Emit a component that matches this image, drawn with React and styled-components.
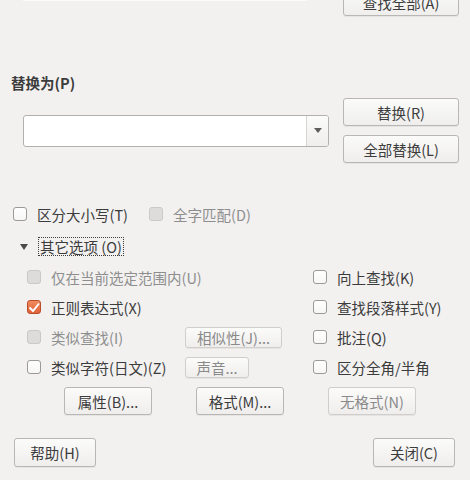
import React from 'react';
import styled, { createGlobalStyle } from 'styled-components';

const GlobalStyle = createGlobalStyle`
  html, body {
    margin: 0;
    padding: 0;
    background: #f2f1f0;
  }
`;

const FONT = `"Noto Sans CJK SC", "Noto Sans", sans-serif`;

const Dialog = styled.div`
  width: 470px;
  height: 480px;
  overflow: hidden;
  background: #f2f1f0;
  font-family: ${FONT};
  font-size: 14.5px;
  color: #3c3c3c;
  padding: 0 11px;
  box-sizing: border-box;
`;

const TopRow = styled.div`
  height: 16px;
  display: flex;
  align-items: flex-end;
  justify-content: space-between;
`;

const SearchStub = styled.div`
  width: 284px;
  height: 24px;
  margin-left: 12px;
  margin-bottom: 15px;
  background: #f7f7f6;
  border-bottom: 1px solid #fbfbfb;
`;

const Button = styled.button`
  box-sizing: border-box;
  width: ${(p) => p.$w || 116}px;
  height: ${(p) => p.$h || 28}px;
  padding: 0;
  border: 1px solid ${(p) => (p.$dim ? '#d0cecb' : '#b9b7b4')};
  border-radius: 3px;
  background: linear-gradient(#fbfbfa, #efeeed);
  font-family: ${FONT};
  font-size: 14.5px;
  color: ${(p) => (p.$dim ? '#8a8a8a' : '#3c3c3c')};
  box-shadow: 0 1px 0 rgba(0, 0, 0, 0.05);
  display: flex;
  align-items: center;
  justify-content: center;
  flex-shrink: 0;
`;

const SectionLabel = styled.div`
  margin-top: 58px;
  line-height: 18px;
  font-weight: bold;
  font-size: 14.5px;
`;

const ReplaceRow = styled.div`
  margin-top: 6px;
  display: flex;
  align-items: center;
  justify-content: space-between;
`;

const Combo = styled.div`
  margin-left: 12px;
  width: 306px;
  height: 32px;
  box-sizing: border-box;
  border: 1px solid #b3b1ae;
  border-radius: 3px;
  background: #fff;
  display: flex;
  justify-content: flex-end;
  overflow: hidden;
`;

const ComboArrow = styled.div`
  width: 21px;
  border-left: 1px solid #d6d5d3;
  background: linear-gradient(#fbfbfa, #efeeed);
  display: flex;
  align-items: center;
  justify-content: center;
  &::after {
    content: '';
    border-left: 4px solid transparent;
    border-right: 4px solid transparent;
    border-top: 5px solid #5e5e5e;
  }
`;

const ButtonStack = styled.div`
  display: flex;
  flex-direction: column;
  gap: 9px;
`;

const OptionRow = styled.div`
  margin-top: 40px;
  height: 22px;
  display: flex;
  align-items: center;
  padding-left: 2px;
`;

const Check = styled.label`
  display: flex;
  align-items: center;
  gap: 10px;
  color: ${(p) => (p.$disabled ? '#8e8e8e' : '#3c3c3c')};
  margin-right: ${(p) => p.$mr || 0}px;
  white-space: nowrap;
  grid-column: ${(p) => (p.$span ? 'span 2' : 'auto')};
`;

const Box = styled.span`
  box-sizing: border-box;
  width: 14px;
  height: 14px;
  border-radius: 3px;
  flex-shrink: 0;
  border: 1px solid
    ${(p) => (p.$checked ? '#b94d28' : p.$disabled ? '#cbc9c6' : '#9c9a97')};
  background: ${(p) =>
    p.$checked
      ? 'linear-gradient(#f08a5d, #e0623a)'
      : p.$disabled
      ? '#dddcda'
      : 'linear-gradient(#ffffff, #f6f6f5)'};
  display: flex;
  align-items: center;
  justify-content: center;
`;

const Expander = styled.div`
  margin-top: 11px;
  height: 21px;
  display: flex;
  align-items: center;
  padding-left: 9px;
  gap: 10px;
  &::before {
    content: '';
    border-left: 4px solid transparent;
    border-right: 4px solid transparent;
    border-top: 6px solid #4a4a4a;
  }
`;

const FocusLabel = styled.span`
  border: 1px dotted #3c3c3c;
  padding: 0 1px;
  line-height: 17px;
`;

const OptionGrid = styled.div`
  margin-top: 5px;
  padding-left: 16px;
  display: grid;
  grid-template-columns: 158px 128px 1fr;
  grid-auto-rows: 30px;
  align-items: center;
`;

const ButtonRow = styled.div`
  margin-top: 5px;
  padding-left: 53px;
  display: flex;
  gap: 44px;
`;

const Footer = styled.div`
  margin-top: 23px;
  padding-left: 3px;
  padding-right: 4px;
  display: flex;
  justify-content: space-between;
`;

const CheckMark = () => (
  <svg width="12" height="11" viewBox="0 0 12 11">
    <path d="M1.5 5.5 L5 9 L11 1.5" fill="none" stroke="#fff" strokeWidth="2" />
  </svg>
);

const CheckItem = ({ label, checked, disabled, span, mr }) => (
  <Check $disabled={disabled} $span={span} $mr={mr}>
    <Box $checked={checked} $disabled={disabled}>
      {checked && <CheckMark />}
    </Box>
    {label}
  </Check>
);

const App = () => (
  <>
    <GlobalStyle />
    <Dialog>
      <TopRow>
        <SearchStub />
        <Button>查找全部(A)</Button>
      </TopRow>

      <SectionLabel>替换为(P)</SectionLabel>
      <ReplaceRow>
        <Combo>
          <ComboArrow />
        </Combo>
        <ButtonStack>
          <Button>替换(R)</Button>
          <Button>全部替换(L)</Button>
        </ButtonStack>
      </ReplaceRow>

      <OptionRow>
        <CheckItem label="区分大小写(T)" mr={21} />
        <CheckItem label="全字匹配(D)" disabled />
      </OptionRow>

      <Expander>
        <FocusLabel>其它选项 (O)</FocusLabel>
      </Expander>

      <OptionGrid>
        <CheckItem label="仅在当前选定范围内(U)" disabled span />
        <CheckItem label="向上查找(K)" />
        <CheckItem label="正则表达式(X)" checked span />
        <CheckItem label="查找段落样式(Y)" />
        <CheckItem label="类似查找(I)" disabled />
        <Button $w={97} $h={21} $dim>相似性(J)...</Button>
        <CheckItem label="批注(Q)" />
        <CheckItem label="类似字符(日文)(Z)" />
        <Button $w={64} $h={21} $dim>声音...</Button>
        <CheckItem label="区分全角/半角" />
      </OptionGrid>

      <ButtonRow>
        <Button $w={88}>属性(B)...</Button>
        <Button $w={88}>格式(M)...</Button>
        <Button $w={88} $dim>无格式(N)</Button>
      </ButtonRow>

      <Footer>
        <Button $w={82} $h={29}>帮助(H)</Button>
        <Button $w={82} $h={29}>关闭(C)</Button>
      </Footer>
    </Dialog>
  </>
);

export default App;
